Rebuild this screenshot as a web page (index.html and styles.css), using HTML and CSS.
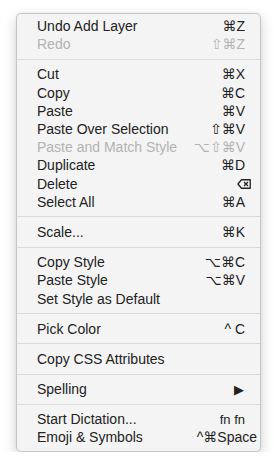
FILE: index.html
```html
<!DOCTYPE html>
<html>
<head>
<meta charset="utf-8">
<link rel="stylesheet" href="styles.css">
</head>
<body>
<div class="menu">
  <div class="item"><span class="label">Undo Add Layer</span><span class="key">⌘Z</span></div>
  <div class="item disabled"><span class="label">Redo</span><span class="key">⇧⌘Z</span></div>
  <div class="sep"></div>
  <div class="item"><span class="label">Cut</span><span class="key">⌘X</span></div>
  <div class="item"><span class="label">Copy</span><span class="key">⌘C</span></div>
  <div class="item"><span class="label">Paste</span><span class="key">⌘V</span></div>
  <div class="item"><span class="label">Paste Over Selection</span><span class="key">⇧⌘V</span></div>
  <div class="item disabled"><span class="label">Paste and Match Style</span><span class="key">⌥⇧⌘V</span></div>
  <div class="item"><span class="label">Duplicate</span><span class="key">⌘D</span></div>
  <div class="item"><span class="label">Delete</span><span class="key key-del">
    <svg width="14" height="10" viewBox="0 0 14 10"><path d="M4.5 0.75 H13.25 V9.25 H4.5 L0.9 5 Z" fill="none" stroke="#222" stroke-width="1.3" stroke-linejoin="round"/><path d="M7 3 L11 7 M11 3 L7 7" stroke="#222" stroke-width="1.3"/></svg>
  </span></div>
  <div class="item"><span class="label">Select All</span><span class="key">⌘A</span></div>
  <div class="sep"></div>
  <div class="item"><span class="label">Scale...</span><span class="key">⌘K</span></div>
  <div class="sep"></div>
  <div class="item"><span class="label">Copy Style</span><span class="key">⌥⌘C</span></div>
  <div class="item"><span class="label">Paste Style</span><span class="key">⌥⌘V</span></div>
  <div class="item"><span class="label">Set Style as Default</span><span class="key"></span></div>
  <div class="sep"></div>
  <div class="item"><span class="label">Pick Color</span><span class="key">^ C</span></div>
  <div class="sep"></div>
  <div class="item"><span class="label">Copy CSS Attributes</span><span class="key"></span></div>
  <div class="sep"></div>
  <div class="item"><span class="label">Spelling</span><span class="key arrow">▶</span></div>
  <div class="sep"></div>
  <div class="item"><span class="label">Start Dictation...</span><span class="key fn">fn fn</span></div>
  <div class="item"><span class="label">Emoji &amp; Symbols</span><span class="key space">^⌘Space</span></div>
</div>
</body>
</html>
```

FILE: styles.css
```css
html, body {
  margin: 0;
  padding: 0;
  background: #ffffff;
}

body {
  font-family: "Liberation Sans", "DejaVu Sans", sans-serif;
  font-size: 14px;
  color: #222222;
}

.menu {
  margin: 13px 0 0 16px;
  width: 245px;
  box-sizing: border-box;
  background: #f4f4f4;
  border: 1px solid #c6c6c6;
  border-radius: 5px;
  box-shadow: 0 5px 14px rgba(0, 0, 0, 0.18), 0 0 3px rgba(0, 0, 0, 0.06);
  padding: 3px 0 4px;
}

.item {
  display: flex;
  justify-content: space-between;
  align-items: center;
  height: 18.2px;
  padding: 0 15px 0 20px;
  white-space: nowrap;
}

.item.disabled {
  color: #b3b3b3;
}

.key {
  font-family: "Liberation Sans", "DejaVu Sans", sans-serif;
  display: flex;
  align-items: center;
}

.key-del {
  margin-right: -6px;
}

.arrow {
  font-size: 13px;
  margin-right: 1px;
}

.fn {
  font-size: 13px;
}

.space {
  margin-right: -12px;
}

.sep {
  height: 1px;
  background: #dadada;
  margin: 5.5px 0;
}
```
